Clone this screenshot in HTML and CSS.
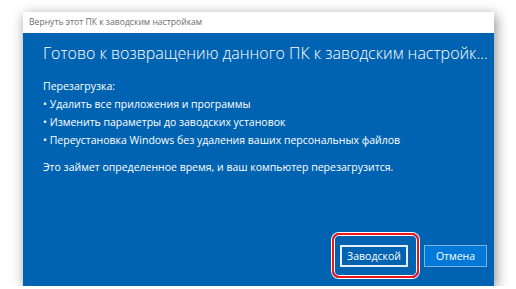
FILE: index.html
```html
<!DOCTYPE html>
<html lang="ru">
<head>
    <meta charset="UTF-8">
    <title>Вернуть этот ПК к заводским настройкам</title>
    <link rel="stylesheet" href="styles.css">
</head>
<body>

    <div class="window">
        <div class="title-bar">Вернуть этот ПК к заводским настройкам</div>

        <div class="content">
            <h1 class="heading">Готово к возвращению данного ПК к заводским настройк...</h1>

            <p class="intro">Перезагрузка:</p>
            <ul class="steps">
                <li>Удалить все приложения и программы</li>
                <li>Изменить параметры до заводских установок</li>
                <li>Переустановка Windows без удаления ваших персональных файлов</li>
            </ul>
            <p class="note">Это займет определенное время, и ваш компьютер перезагрузится.</p>

            <!-- кнопки внизу справа -->
            <div class="button-group">
                <div class="highlight">
                    <button type="button" class="btn btn-reset">Заводской</button>
                </div>
                <button type="button" class="btn btn-cancel">Отмена</button>
            </div>
        </div>
    </div>

</body>
</html>
```

FILE: styles.css
```css
/* --- General --- */
body {
    margin: 0;
    background: #ffffff;
    font-family: "Open Sans", "Noto Sans", sans-serif;
    overflow: hidden;
}

/* --- Window --- */
.window {
    margin: 12px 0 0 23px;
    width: 471px;
    height: 274px;
    display: flex;
    flex-direction: column;
    box-shadow: 2px 3px 12px rgba(0, 0, 0, 0.45);
}

.title-bar {
    height: 21px;
    background: #ffffff;
    color: #6d6d6d;
    font-size: 8.6px;
    line-height: 21px;
    padding-left: 6px;
}

.content {
    flex: 1;
    background: #0063b1;
    color: #ffffff;
    padding: 8px 0 0 20px;
    display: flex;
    flex-direction: column;
}

.heading {
    margin: 0;
    font-size: 16px;
    font-weight: 300;
    line-height: 24px;
    white-space: nowrap;
}

.intro, .note {
    margin: 0;
    font-size: 10.5px;
    line-height: 18px;
}
.intro { margin-top: 12px; }

.steps {
    list-style: none;
    margin: 0;
    padding: 0;
    font-size: 10.5px;
    line-height: 18px;
}
.steps li::before { content: "• "; }

.note { margin-top: 9px; }

/* --- Buttons --- */
.button-group {
    margin-top: auto;
    margin-bottom: 8px;
    margin-right: 7px;
    display: flex;
    justify-content: flex-end;
    align-items: center;
    gap: 5px;
}

.highlight {
    padding: 10px 9px 9px 6px;
    border: 2px solid #f0141e;
    border-radius: 7px;
    box-shadow: 0 0 0 1px #ffffff, inset 0 0 0 1px #ffffff;
}

.btn {
    display: block;
    height: 22px;
    font-family: inherit;
    font-size: 10.5px;
    color: #ffffff;
    padding: 0;
    cursor: pointer;
}

.btn-reset {
    width: 68px;
    background: #0063b1;
    border: 2px solid #e6eef6;
}

.btn-cancel {
    width: 63px;
    background: #0078d7;
    border: 1px solid #7fb2e3;
}
```
